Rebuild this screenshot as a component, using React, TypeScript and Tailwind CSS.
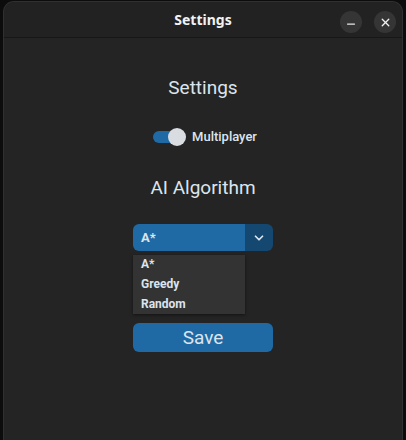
import { ChevronDown, Minus, X } from "lucide-react";

const roboto = { fontFamily: "Roboto, 'Liberation Sans', sans-serif" };

function TitleBar() {
  return (
    <div className="relative flex h-[36px] shrink-0 items-center justify-center border-b border-[#171717] bg-[#222222]">
      <span
        className="text-[14px] font-bold text-[#f2f2f2]"
        style={{ fontFamily: "'Noto Sans', 'DejaVu Sans', sans-serif" }}
      >
        Settings
      </span>
      <div className="absolute right-[6px] top-[9px] flex gap-[12px]">
        <button className="flex size-[22px] items-center justify-center rounded-full bg-[#353535] text-[#e8e8e8]">
          <Minus size={12} strokeWidth={2.5} className="mt-[4px]" />
        </button>
        <button className="flex size-[22px] items-center justify-center rounded-full bg-[#353535] text-[#f0f0f0]">
          <X size={13} strokeWidth={2.5} />
        </button>
      </div>
    </div>
  );
}

export default function App() {
  return (
    <div className="flex h-[440px] w-[406px] bg-[#0c0c0c] px-[3px] pt-[1px]" style={roboto}>
      <div className="flex flex-1 flex-col overflow-hidden rounded-t-[11px] border border-b-0 border-[#303030] bg-[#242424]">
        <TitleBar />
        <div className="flex flex-col items-center">
          <h1 className="mt-[38px] h-[24px] text-[19px] leading-[24px] text-[#dce4ee]">Settings</h1>

          <div className="mt-[27px] flex h-[20px] items-center gap-[6px] pl-[4px]">
            <div className="relative h-[12px] w-[31px] rounded-full bg-[#1f6aa5]">
              <div className="absolute right-[-2px] top-[-3px] size-[18px] rounded-full bg-[#d9dde2]" />
            </div>
            <span className="ml-[2px] text-[13px] font-medium text-[#dce4ee]">Multiplayer</span>
          </div>

          <h2 className="mt-[29px] h-[24px] text-[19px] leading-[24px] text-[#dce4ee]">AI Algorithm</h2>

          <div className="mt-[24px] flex h-[27px] w-[140px] overflow-hidden rounded-[6px]">
            <div className="flex flex-1 items-center bg-[#1f6aa5] pl-[8px] text-[13px] font-bold text-[#dce4ee]">
              A*
            </div>
            <div className="flex w-[28px] items-center justify-center bg-[#144870] text-[#dce4ee]">
              <ChevronDown size={14} strokeWidth={3} />
            </div>
          </div>

          <div className="mt-[4px] flex w-[140px]">
            <div className="flex h-[59px] w-[112px] flex-col justify-center gap-[3px] bg-[#333333] pl-[8px] text-[12px] font-bold leading-[17px] text-[#dce4ee] shadow-[0_1px_3px_rgba(0,0,0,0.5)]">
              <span>A*</span>
              <span>Greedy</span>
              <span>Random</span>
            </div>
          </div>

          <button className="mt-[9px] flex h-[29px] w-[140px] items-center justify-center rounded-[6px] bg-[#1f6aa5] pt-[2px] text-[19px] text-[#dce4ee]">
            Save
          </button>
        </div>
      </div>
    </div>
  );
}
